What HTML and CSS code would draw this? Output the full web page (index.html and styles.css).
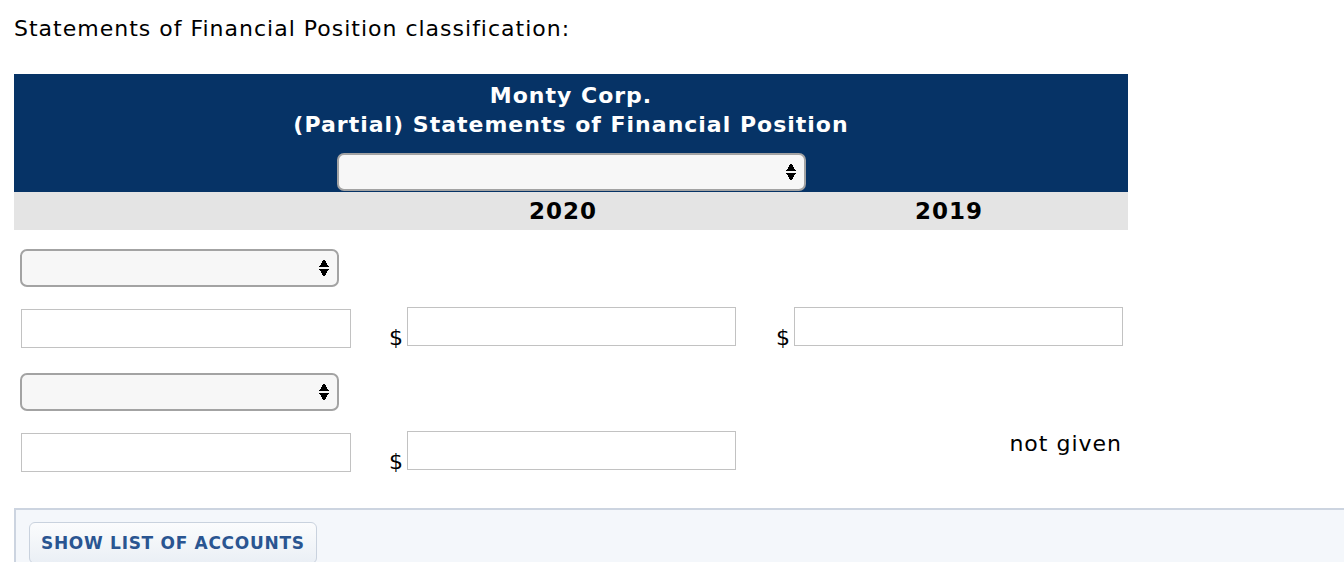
FILE: index.html
```html
<!DOCTYPE html>
<html lang="en">
<head>
  <meta charset="UTF-8" />
  <title>Statements of Financial Position classification</title>
  <link rel="stylesheet" href="styles.css">
</head>
<body>
  <p class="intro">Statements of Financial Position classification:</p>

  <div class="sheet">
    <div class="sheet-head">
      <div class="company">Monty Corp.</div>
      <div class="company">(Partial) Statements of Financial Position</div>
      <div class="select-wrap head-select">
        <select class="picker"></select>
      </div>
    </div>

    <div class="years">
      <div></div>
      <div class="year">2020</div>
      <div class="year">2019</div>
    </div>

    <div class="row row-select">
      <div class="select-wrap">
        <select class="picker"></select>
      </div>
    </div>

    <div class="row row-input">
      <div class="label-cell"><input type="text" class="label-input" /></div>
      <div class="amount amount-2020"><span class="dollar">$</span><input type="text" class="money" /></div>
      <div class="amount amount-2019"><span class="dollar">$</span><input type="text" class="money" /></div>
    </div>

    <div class="row row-select">
      <div class="select-wrap">
        <select class="picker"></select>
      </div>
    </div>

    <div class="row row-input">
      <div class="label-cell"><input type="text" class="label-input" /></div>
      <div class="amount amount-2020"><span class="dollar">$</span><input type="text" class="money" /></div>
      <div class="amount amount-2019 note">not given</div>
    </div>
  </div>

  <div class="accounts-panel">
    <button class="accounts-btn">SHOW LIST OF ACCOUNTS</button>
  </div>
</body>
</html>
```

FILE: styles.css
```css
body {
  margin: 0;
  font-family: "DejaVu Sans", Verdana, sans-serif;
  color: #000;
  background: #fff;
  overflow: hidden;
}

.intro {
  margin: 0;
  padding: 15px 14px 0;
  font-size: 22px;
  line-height: 28px;
  letter-spacing: 1px;
}

.sheet {
  width: 1114px;
  margin: 31px 0 0 14px;
}

.sheet-head {
  background-color: #063366;
  color: #fff;
  text-align: center;
  padding: 7px 0 1px;
}

.company {
  font-weight: bold;
  font-size: 22px;
  line-height: 29px;
  letter-spacing: 1px;
}

.head-select {
  width: 469px;
  margin: 14px auto 0;
  text-align: left;
}

.select-wrap {
  position: relative;
  height: 38px;
}

.select-wrap::after {
  content: "";
  position: absolute;
  right: 10px;
  top: 10px;
  width: 10px;
  height: 18px;
  background:
    linear-gradient(to bottom right, transparent 50%, #000 50%) left 0 / 50% 8px no-repeat,
    linear-gradient(to bottom left, transparent 50%, #000 50%) right 0 / 50% 8px no-repeat,
    linear-gradient(to top right, transparent 50%, #000 50%) left 10px / 50% 8px no-repeat,
    linear-gradient(to top left, transparent 50%, #000 50%) right 10px / 50% 8px no-repeat;
  pointer-events: none;
}

.picker {
  -webkit-appearance: none;
  appearance: none;
  display: block;
  width: 100%;
  height: 38px;
  box-sizing: border-box;
  background-color: #f7f7f7;
  border: 2px solid #a3a3a3;
  border-radius: 7px;
  font-family: inherit;
  font-size: 16px;
}

.years {
  display: grid;
  grid-template-columns: 342px 414px 358px;
  background-color: #e4e4e4;
  height: 38px;
  align-items: center;
}

.year {
  text-align: center;
  font-weight: bold;
  font-size: 23px;
  letter-spacing: 1px;
}

.row {
  display: grid;
  grid-template-columns: 342px 414px 358px;
}

.row-select {
  padding-top: 19px;
}

.row-select .select-wrap {
  width: 319px;
  margin-left: 6px;
}

.row-input {
  padding-top: 20px;
  padding-bottom: 6px;
}

.label-cell {
  padding: 2px 0 0 7px;
}

.label-input,
.money {
  display: block;
  box-sizing: border-box;
  height: 39px;
  border: 1px solid #c2c2c2;
  background: #fff;
  margin: 0;
  padding: 0 6px;
  font-family: inherit;
  font-size: 16px;
}

.label-input {
  width: 330px;
}

.money {
  width: 329px;
}

.amount {
  display: flex;
  align-items: flex-start;
}

.amount-2020 {
  padding-left: 33px;
}

.amount-2019 {
  padding-left: 6px;
}

.dollar {
  font-size: 22px;
  line-height: 24px;
  width: 18px;
  margin: 19px 0 -5px;
}

.note {
  justify-content: flex-end;
  padding-right: 6px;
  padding-top: 1px;
  font-size: 22px;
  line-height: 24px;
  letter-spacing: 1px;
}

.accounts-panel {
  margin: 30px 0 0 14px;
  background-color: #f4f7fb;
  border-top: 2px solid #ccd4e0;
  border-left: 2px solid #ccd4e0;
  height: 60px;
  padding: 12px 0 0 13px;
}

.accounts-btn {
  font-family: inherit;
  font-weight: bold;
  font-size: 17px;
  color: #2a5591;
  background: linear-gradient(#fbfcfd, #eaeff5);
  border: 1px solid #c9d2de;
  border-radius: 6px;
  padding: 10px 11px;
  letter-spacing: 0.7px;
}
```
